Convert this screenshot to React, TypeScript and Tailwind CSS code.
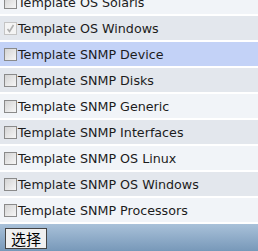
const TEMPLATES = [
  { name: "Template OS Solaris", checked: false, disabled: false },
  { name: "Template OS Windows", checked: true, disabled: true },
  { name: "Template SNMP Device", checked: false, disabled: false, hover: true },
  { name: "Template SNMP Disks", checked: false, disabled: false },
  { name: "Template SNMP Generic", checked: false, disabled: false },
  { name: "Template SNMP Interfaces", checked: false, disabled: false },
  { name: "Template SNMP OS Linux", checked: false, disabled: false },
  { name: "Template SNMP OS Windows", checked: false, disabled: false },
  { name: "Template SNMP Processors", checked: false, disabled: false },
];

function Checkbox({ checked, disabled }: { checked: boolean; disabled: boolean }) {
  return (
    <span
      className={
        "flex items-center justify-center w-[13px] h-[13px] shrink-0 border " +
        (disabled ? "border-[#c4c4c4] bg-[#f4f4f4]" : "border-[#8a8a8a] bg-gradient-to-br from-[#d4d4d4] to-[#f6f6f6]")
      }
    >
      {checked && (
        <svg width="9" height="9" viewBox="0 0 9 9">
          <path d="M1.5 5 L3.5 7.5 L7.5 1" fill="none" stroke="#b0b0b0" strokeWidth="1.6" />
        </svg>
      )}
    </span>
  );
}

export default function App() {
  return (
    <div className="w-[258px] h-[251px] overflow-hidden bg-white" style={{ fontFamily: '"DejaVu Sans", Verdana, sans-serif' }}>
      <div className="-mt-[10px]">
        {TEMPLATES.map((t, i) => (
          <div
            key={t.name}
            className={
              "flex items-center h-[26px] border-b-2 border-white pl-[4px] gap-[1px] text-[12.7px] text-[#1c1c1c] " +
              (t.hover ? "bg-[#c3d2f7]" : i % 2 === 0 ? "bg-[#f1f4f8]" : "bg-[#e3e7ed]")
            }
          >
            <Checkbox checked={t.checked} disabled={t.disabled} />
            <span className="pt-[1px]">{t.name}</span>
          </div>
        ))}
      </div>
      <div className="h-[28px] bg-gradient-to-b from-[#a9c1d9] to-[#7697b8] flex items-center pl-[5px]">
        <button
          className="h-[21px] px-[5px] bg-[#f0f0f0] border border-[#444] text-[15px] text-black leading-none"
          style={{ fontFamily: '"Noto Sans CJK SC", sans-serif' }}
        >
          选择
        </button>
      </div>
    </div>
  );
}
